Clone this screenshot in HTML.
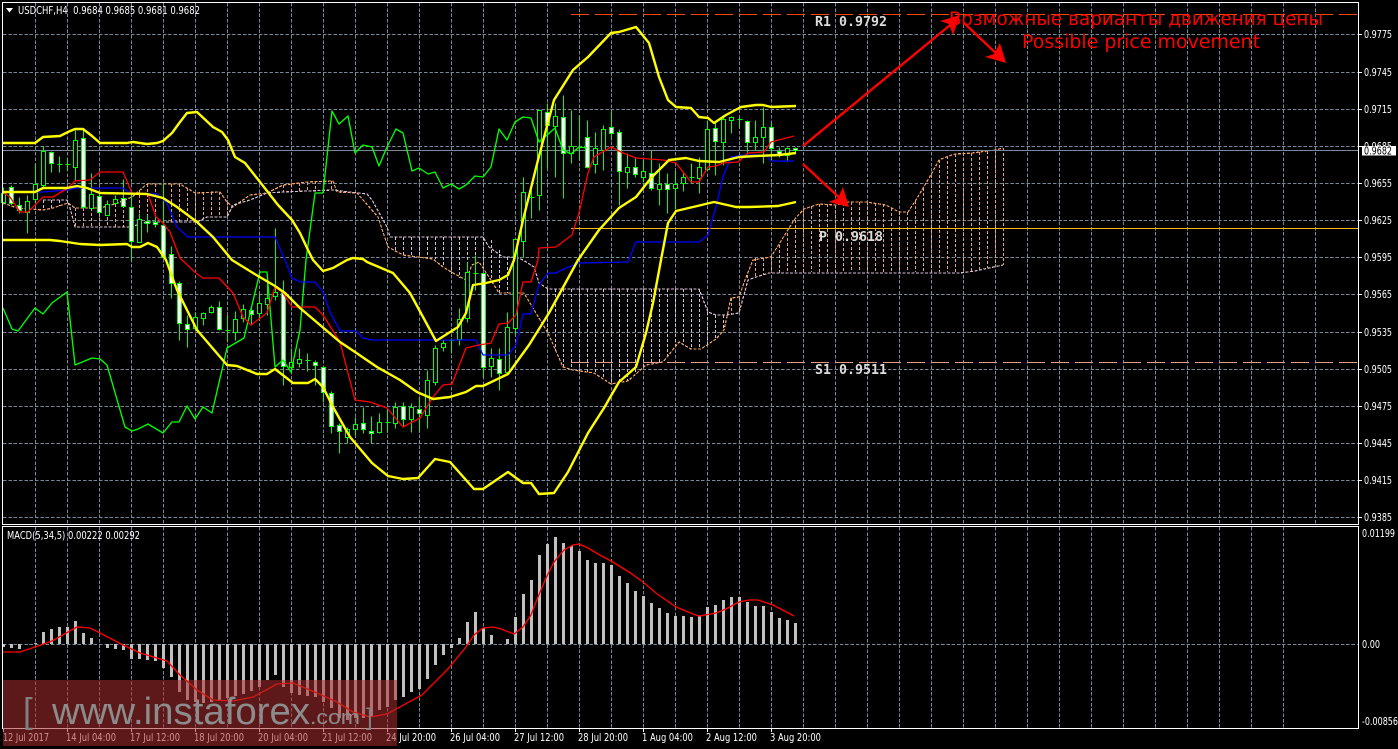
<!DOCTYPE html>
<html><head><meta charset="utf-8"><title>USDCHF,H4</title>
<style>html,body{margin:0;padding:0;background:#000;width:1398px;height:749px;overflow:hidden}svg{display:block}
.ax{font:10.5px "DejaVu Sans","Liberation Sans",sans-serif;fill:#fff}
.mono{font:bold 13.3px "DejaVu Sans Mono","Liberation Mono",monospace;fill:#ddd}
.rd{font:18.5px "DejaVu Sans","Liberation Sans",sans-serif;fill:#f00}
</style></head><body>
<svg width="1398" height="749" viewBox="0 0 1398 749" xmlns="http://www.w3.org/2000/svg">
<rect width="1398" height="749" fill="#000"/>
<!-- grid -->
<g stroke="#778899" fill="none" stroke-dasharray="3.5 1.83" shape-rendering="crispEdges">
<path d="M3 34.5H1358M3 72.5H1358M3 109.5H1358M3 146.5H1358M3 183.5H1358M3 220.5H1358M3 257.5H1358M3 294.5H1358M3 332.5H1358M3 369.5H1358M3 406.5H1358M3 443.5H1358M3 480.5H1358M3 517.5H1358M3 644.5H1358"/>
<path d="M35.5 3v521m32-521v521m32-521v521m32-521v521m32-521v521m32-521v521m32-521v521m32-521v521m32-521v521m32-521v521m32-521v521m32-521v521m32-521v521m32-521v521m32-521v521m32-521v521m32-521v521m32-521v521m32-521v521m32-521v521m32-521v521m32-521v521m32-521v521m32-521v521m32-521v521m32-521v521m32-521v521m32-521v521m32-521v521m32-521v521m32-521v521m32-521v521m32-521v521m32-521v521m32-521v521m32-521v521m32-521v521m32-521v521m32-521v521m32-521v521m32-521v521"/>
<path d="M35.5 527v201m32-201v201m32-201v201m32-201v201m32-201v201m32-201v201m32-201v201m32-201v201m32-201v201m32-201v201m32-201v201m32-201v201m32-201v201m32-201v201m32-201v201m32-201v201m32-201v201m32-201v201m32-201v201m32-201v201m32-201v201m32-201v201m32-201v201m32-201v201m32-201v201m32-201v201m32-201v201m32-201v201m32-201v201m32-201v201m32-201v201m32-201v201m32-201v201m32-201v201m32-201v201m32-201v201m32-201v201m32-201v201m32-201v201m32-201v201"/>
</g>
<!-- ichimoku hatch -->
<g transform="translate(.5 0)" fill="none" stroke-width="1" stroke-dasharray="3 2" shape-rendering="crispEdges">
<path stroke="#F4A460" d="M3 198V204M11 198V205M75 208V227M83 208V227M91 208V227M99 208V227M107 207V227M115 204V227M123 200V227M131 197V227M139 190V225M147 184V222M155 184V222M163 184V222M171 184V222M179 184V222M187 188V222M195 193V222M203 192V219M211 192V217M219 192V217M227 202V217M283 185V192M291 184V191M299 183V191M307 182V191M315 181V190M323 181V190M331 181V190M731 298V315M739 298V313M747 275V280M755 258V277M763 258V275M771 257V273M779 245V273M787 233V273M795 220V272M803 209V272M811 206V272M819 204V272M827 204V272M835 205V272M843 203V272M851 202V272M859 202V272M867 202V272M875 203V272M883 204V272M891 208V272M899 212V272M907 212V272M915 201V272M923 188V272M931 175V272M939 160V272M947 156V272M955 154V272M963 153V271M971 153V271M979 152V270M987 151V268M995 150V266M1003 148V265"/>
<path stroke="#D8BFD8" d="M43 200V209M51 200V208M59 200V206M67 200V204M395 237V250M403 237V255M411 237V256M419 237V257M427 237V258M435 237V259M443 237V267M451 237V274M459 237V278M467 237V275M475 237V263M483 237V268M491 240V280M499 250V293M507 257V293M515 257V293M547 289V332M555 289V350M563 289V367M571 289V370M579 289V371M587 289V372M595 289V373M603 289V379M611 289V384M619 289V382M627 289V381M635 289V372M643 289V367M651 289V364M659 289V362M667 289V358M675 289V346M683 289V344M691 289V349M699 289V349M707 312V344M715 315V339M723 315V331"/>
</g>
<!-- ichimoku spans -->
<g fill="none" stroke-width="1.2" stroke-dasharray="3 1.5" shape-rendering="crispEdges">
<polyline stroke="#F4A460" points="3,203 17,208 43,210 53,208 68,203 75,208 100,208 115,204 132,197 147,184 180,184 195,193 220,192 227,202 233,207 250,195 267,193 283,185 307,182 333,181 337,192 357,193 378,217 388,247 403,255 433,259 443,267 453,273 466,280 472,265 479,262 489,277 499,293 524,293 548,333 563,367 573,370 594,373 611,384 628,381 646,365 663,362 679,342 691,349 701,349 716,339 724,330 731,298 739,297 745,280 753,260 771,257 786,233 794,220 804,209 819,204 836,205 848,202 866,202 886,205 899,212 908,212 916,200 932,173 939,160 949,156 955,154 972,153 995,150 1003,148"/>
<polyline stroke="#D8BFD8" points="43,200 67,200 70,208 75,227 130,227 147,222 197,222 207,217 227,217 233,205 250,200 267,193 283,192 333,190 367,194 372,200 387,227 390,237 483,237 489,247 503,257 516,257 523,260 534,267 539,283 548,289 699,289 708,312 716,315 726,315 739,313 748,280 756,277 769,273 960,273 975,271 1003,265"/>
</g>
<!-- bid + pivots -->
<path d="M3 150.5H1358" stroke="#778899" shape-rendering="crispEdges"/>
<path d="M571 14.5H1358" stroke="#FF4500" stroke-dasharray="18 6" shape-rendering="crispEdges"/>
<path d="M571 362.5H1358" stroke="#DE9C88" stroke-dasharray="18 6" shape-rendering="crispEdges"/>
<path d="M571 228.5H1358" stroke="#FDB813" shape-rendering="crispEdges"/>
<!-- candles -->
<g transform="translate(.5 .5)" shape-rendering="crispEdges" stroke="#0f0" stroke-width="1">
<path fill="none" d="M3 187V204M11 185V204M19 197V213M27 195V233M35 164V203M43 146V187M51 151V172M59 156V172M57 164h5M67 158V170M65 164h5M75 130V180M83 128V208M91 173V208M99 192V213M107 200V215M115 195V204M123 179V207M131 192V260M139 213V242M147 215V232M155 213V227M163 183V258M171 246V298M179 281V340M187 315V347M195 312V330M203 312V325M211 305V313M219 301V330M227 315V341M225 330h5M235 311V340M243 304V322M251 308V325M259 293V320M267 282V315M275 228V300M283 280V385M291 348V373M299 348V367M307 353V371M305 360h5M315 360V385M323 366V402M331 391V433M339 423V453M347 427V443M355 417V435M363 407V433M371 416V443M379 413V433M387 408V432M385 422h5M395 402V428M403 402V427M411 403V432M419 396V431M427 370V428M435 345V385M443 340V351M451 338V353M449 340h5M459 308V345M467 262V322M475 255V290M473 273h5M483 273V377M491 348V377M499 348V390M507 312V373M515 239V335M523 177V257M531 190V218M529 197h5M539 110V210M547 103V168M555 103V177M563 95V198M571 110V163M579 115V160M577 147h5M587 120V168M595 132V173M603 125V170M611 111V140M619 129V205M627 153V188M635 158V177M643 160V182M651 150V190M659 163V205M667 173V213M675 170V209M683 172V191M691 163V183M689 177h5M699 157V193M707 120V171M715 122V175M723 117V165M731 116V133M739 117V127M737 119h5M747 120V152M755 120V150M763 107V163M771 122V160M779 147V157M787 147V161M795 147V152"/>
<path fill="#000" d="M1 193h4v9h-4zM25 201h4v11h-4zM33 184h4v15h-4zM41 151h4v34h-4zM73 140h4v27h-4zM89 194h4v14h-4zM105 204h4v11h-4zM113 199h4v4h-4zM137 219h4v23h-4zM193 317h4v11h-4zM201 313h4v5h-4zM209 307h4v5h-4zM233 319h4v13h-4zM241 309h4v9h-4zM257 303h4v10h-4zM265 298h4v6h-4zM273 292h4v4h-4zM289 362h4v5h-4zM297 359h4v4h-4zM345 429h4v8h-4zM353 424h4v5h-4zM377 422h4v10h-4zM393 407h4v16h-4zM409 407h4v12h-4zM425 380h4v35h-4zM433 348h4v34h-4zM441 343h4v4h-4zM457 319h4v20h-4zM465 272h4v46h-4zM489 358h4v8h-4zM505 327h4v45h-4zM513 239h4v89h-4zM521 192h4v49h-4zM537 110h4v85h-4zM553 116h4v10h-4zM569 146h4v7h-4zM593 148h4v16h-4zM601 129h4v21h-4zM625 167h4v5h-4zM641 171h4v6h-4zM657 184h4v5h-4zM673 184h4v4h-4zM681 177h4v6h-4zM697 167h4v11h-4zM705 129h4v40h-4zM721 119h4v23h-4zM729 117h4v3h-4zM753 137h4v5h-4zM761 127h4v10h-4zM785 148h4v7h-4z"/>
<path fill="#fff" d="M9 187h4v16h-4zM17 205h4v5h-4zM49 152h4v11h-4zM81 138h4v69h-4zM97 196h4v16h-4zM121 198h4v8h-4zM129 207h4v34h-4zM145 221h4v2h-4zM153 222h4v2h-4zM161 225h4v32h-4zM169 254h4v29h-4zM177 283h4v40h-4zM185 324h4v5h-4zM217 307h4v22h-4zM249 310h4v4h-4zM281 292h4v74h-4zM313 362h4v3h-4zM321 367h4v25h-4zM329 393h4v33h-4zM337 425h4v6h-4zM361 423h4v6h-4zM369 431h4v2h-4zM401 406h4v13h-4zM417 409h4v4h-4zM481 273h4v94h-4zM497 359h4v14h-4zM545 112h4v13h-4zM561 117h4v36h-4zM585 137h4v30h-4zM609 127h4v6h-4zM617 132h4v39h-4zM633 167h4v7h-4zM649 173h4v15h-4zM665 184h4v5h-4zM713 128h4v13h-4zM745 121h4v21h-4zM769 127h4v21h-4zM777 151h4v4h-4zM793 148h4v2h-4z"/>
</g>
<!-- ichimoku lines -->
<g fill="none" stroke-width="1.35" stroke-linejoin="round">
<polyline stroke="#0f0" points="3,308 12,329 18,331 35,308 43,314 52,303 67,292 75,365 92,358 100,359 107,365 125,427 132,431 138,429 148,424 163,433 172,422 179,422 187,406 195,419 203,407 212,413 227,348 244,338 260,272 267,272 275,367 283,360 291,372 300,330 306,260 315,193 323,193 332,111 339,124 348,116 355,153 363,145 372,147 379,166 387,147 396,129 403,133 412,171 419,168 428,174 435,172 443,188 451,184 459,189 466,185 475,176 483,177 491,167 499,129 507,140 515,122 523,117 531,118 539,142 547,135 555,128 563,150 571,154 579,147 587,148"/>
<polyline stroke="#00f" points="3,192 43,192 68,190 75,188 123,188 130,193 157,194 167,203 177,227 188,237 275,237 285,260 292,278 300,282 315,282 323,292 330,312 340,331 356,331 363,338 372,340 476,340 483,355 508,355 516,345 523,314 531,314 539,285 548,273 556,273 564,269 579,263 628,262 636,242 699,242 708,235 716,207 723,177 731,157 744,155 766,155 771,161 794,161"/>
<polyline stroke="#f00" points="3,192 10,197 20,212 28,212 43,197 53,197 68,188 75,181 90,180 100,172 123,172 132,193 148,194 156,217 163,223 170,232 180,258 197,274 203,278 219,278 233,293 243,317 251,325 267,313 275,287 283,293 292,307 315,307 323,315 340,342 355,400 370,402 387,408 403,427 420,418 433,397 443,385 452,384 466,348 479,345 491,343 499,324 508,323 516,315 523,282 531,282 538,260 539,248 556,247 572,235 579,213 588,173 594,157 611,147 623,153 636,158 663,160 676,163 691,182 699,182 708,167 716,166 723,163 738,162 748,153 764,152 771,142 794,136"/>
</g>
<!-- bollinger -->
<g fill="none" stroke="#ff0" stroke-width="2.4" stroke-linejoin="round">
<polyline points="3,143 35,143 43,137 60,136 68,132 75,129 83,129 92,136 100,143 127,143 133,142 147,144 157,143 163,141 172,133 180,122 187,113 197,112 213,127 222,132 228,140 235,157 245,163 260,182 278,205 292,220 300,233 308,250 313,260 323,271 333,268 347,260 353,258 363,259 367,262 393,273 410,293 436,341 458,327 466,313 473,285 486,283 499,280 508,275 514,260 523,220 538,160 546,130 554,100 573,70 588,57 611,33 619,32 636,27 649,43 659,77 668,100 676,107 691,108 699,117 708,118 714,123 726,115 741,107 756,105 763,105 771,107 796,106"/>
<polyline points="3,192 35,192 43,188 67,188 77,186 87,188 100,193 147,194 163,198 177,207 197,222 213,237 232,260 253,273 275,286 285,293 300,308 320,325 340,342 355,352 377,367 400,380 417,392 433,399 450,397 466,392 476,386 483,386 508,374 529,345 549,313 578,260 599,230 619,208 636,197 651,178 669,160 686,158 699,161 719,162 739,157 756,156 779,155 796,153"/>
<polyline points="3,240 50,240 60,241 80,244 100,245 127,244 132,247 140,247 148,243 157,247 166,260 177,290 197,330 227,365 237,366 257,374 267,374 275,369 293,383 308,383 315,379 323,387 333,407 350,437 372,463 388,476 403,479 418,478 435,459 450,462 466,480 474,489 483,489 508,472 523,483 531,483 539,494 554,493 568,472 588,433 604,408 619,382 636,367 646,333 653,303 661,260 668,223 676,211 693,207 714,202 736,207 749,207 778,206 796,202"/>
</g>
<!-- macd bars -->
<g transform="translate(.5 0)" stroke="#C0C0C0" stroke-width="3" fill="none" shape-rendering="crispEdges">
<path d="M3 644V647M11 644V648M19 644V649M35 644V643M43 644V632M51 644V629M59 644V627M67 644V627M75 644V621M83 644V633M91 644V638M107 644V648M115 644V649M123 644V650M131 644V659M139 644V659M147 644V660M155 644V661M163 644V668M171 644V677M179 644V692M187 644V700M195 644V702M203 644V703M211 644V702M219 644V701M227 644V698M235 644V696M243 644V694M251 644V691M259 644V687M267 644V680M275 644V675M283 644V687M291 644V693M299 644V695M307 644V696M315 644V697M323 644V702M331 644V708M339 644V718M347 644V720M355 644V718M363 644V718M371 644V717M379 644V710M387 644V707M395 644V700M403 644V697M411 644V692M419 644V689M427 644V679M435 644V665M443 644V655M451 644V648M459 644V638M467 644V622M475 644V612M483 644V628M491 644V635M507 644V639M515 644V617M523 644V594M531 644V580M539 644V555M547 644V544M555 644V537M563 644V543M571 644V546M579 644V551M587 644V560M595 644V563M603 644V563M611 644V565M619 644V576M627 644V583M635 644V591M643 644V596M651 644V603M659 644V608M667 644V613M675 644V616M683 644V616M691 644V617M699 644V616M707 644V607M715 644V605M723 644V600M731 644V597M739 644V597M747 644V602M755 644V606M763 644V606M771 644V612M779 644V618M787 644V620M795 644V623"/>
</g>
<polyline fill="none" stroke="#f00" stroke-width="1.35" points="3,652 20,652 35,647 52,641 77,627 90,628 100,633 123,645 140,653 167,661 180,675 197,690 213,700 233,701 253,697 277,684 293,683 317,693 337,702 353,712 370,717 387,714 422,695 447,670 466,647 474,635 483,628 493,627 501,629 514,634 523,627 531,615 538,597 546,578 554,562 564,550 573,545 579,544 588,548 598,554 611,561 629,572 643,582 656,593 676,607 693,614 699,616 716,613 726,609 739,602 749,600 758,600 773,605 794,616"/>
<!-- frames -->
<g stroke="#fff" fill="none" shape-rendering="crispEdges">
<path d="M2.5 2.5H1358.5V524.5H2.5Z"/>
<path d="M2.5 526.5H1358.5V728.5H2.5Z"/>
<path d="M1358 34.5h4M1358 72.5h4M1358 109.5h4M1358 146.5h4M1358 183.5h4M1358 220.5h4M1358 257.5h4M1358 294.5h4M1358 332.5h4M1358 369.5h4M1358 406.5h4M1358 443.5h4M1358 480.5h4M1358 517.5h4M3.5 728v4M67.5 728v4M131.5 728v4M195.5 728v4M259.5 728v4M323.5 728v4M387.5 728v4M451.5 728v4M515.5 728v4M579.5 728v4M643.5 728v4M707.5 728v4M771.5 728v4"/>
</g>
<!-- header -->
<path d="M6 8h7l-3.5 4.5z" fill="#fff"/>
<text class="ax" x="18" y="14" textLength="182" lengthAdjust="spacingAndGlyphs" xml:space="preserve">USDCHF,H4  0.9684 0.9685 0.9681 0.9682</text>
<text class="ax" x="7" y="539" textLength="133" lengthAdjust="spacingAndGlyphs">MACD(5,34,5) 0.00222 0.00292</text>
<!-- price axis -->
<g class="ax">
<text x="1364" y="38" textLength="28" lengthAdjust="spacingAndGlyphs">0.9775</text>
<text x="1364" y="76" textLength="28" lengthAdjust="spacingAndGlyphs">0.9745</text>
<text x="1364" y="113" textLength="28" lengthAdjust="spacingAndGlyphs">0.9715</text>
<text x="1364" y="150" textLength="28" lengthAdjust="spacingAndGlyphs">0.9685</text>
<text x="1364" y="187" textLength="28" lengthAdjust="spacingAndGlyphs">0.9655</text>
<text x="1364" y="224" textLength="28" lengthAdjust="spacingAndGlyphs">0.9625</text>
<text x="1364" y="261" textLength="28" lengthAdjust="spacingAndGlyphs">0.9595</text>
<text x="1364" y="298" textLength="28" lengthAdjust="spacingAndGlyphs">0.9565</text>
<text x="1364" y="336" textLength="28" lengthAdjust="spacingAndGlyphs">0.9535</text>
<text x="1364" y="373" textLength="28" lengthAdjust="spacingAndGlyphs">0.9505</text>
<text x="1364" y="410" textLength="28" lengthAdjust="spacingAndGlyphs">0.9475</text>
<text x="1364" y="447" textLength="28" lengthAdjust="spacingAndGlyphs">0.9445</text>
<text x="1364" y="484" textLength="28" lengthAdjust="spacingAndGlyphs">0.9415</text>
<text x="1364" y="521" textLength="28" lengthAdjust="spacingAndGlyphs">0.9385</text>
<text x="1362" y="537" textLength="33" lengthAdjust="spacingAndGlyphs">0.01199</text>
<text x="1362" y="648" textLength="18" lengthAdjust="spacingAndGlyphs">0.00</text>
<text x="1362" y="725" textLength="36" lengthAdjust="spacingAndGlyphs">-0.00856</text>
</g>
<rect x="1362" y="146" width="34" height="9.5" fill="#fff"/>
<text x="1364" y="154.5" font-family="DejaVu Sans,sans-serif" font-size="10.5" fill="#000" textLength="28" lengthAdjust="spacingAndGlyphs">0.9682</text>
<!-- time axis -->
<g class="ax">
<text x="3" y="741" textLength="46" lengthAdjust="spacingAndGlyphs">12 Jul 2017</text>
<text x="66" y="741" textLength="50" lengthAdjust="spacingAndGlyphs">14 Jul 04:00</text>
<text x="130" y="741" textLength="50" lengthAdjust="spacingAndGlyphs">17 Jul 12:00</text>
<text x="194" y="741" textLength="50" lengthAdjust="spacingAndGlyphs">18 Jul 20:00</text>
<text x="258" y="741" textLength="50" lengthAdjust="spacingAndGlyphs">20 Jul 04:00</text>
<text x="322" y="741" textLength="50" lengthAdjust="spacingAndGlyphs">21 Jul 12:00</text>
<text x="386" y="741" textLength="50" lengthAdjust="spacingAndGlyphs">24 Jul 20:00</text>
<text x="450" y="741" textLength="50" lengthAdjust="spacingAndGlyphs">26 Jul 04:00</text>
<text x="514" y="741" textLength="50" lengthAdjust="spacingAndGlyphs">27 Jul 12:00</text>
<text x="578" y="741" textLength="50" lengthAdjust="spacingAndGlyphs">28 Jul 20:00</text>
<text x="642" y="741" textLength="51" lengthAdjust="spacingAndGlyphs">1 Aug 04:00</text>
<text x="706" y="741" textLength="51" lengthAdjust="spacingAndGlyphs">2 Aug 12:00</text>
<text x="770" y="741" textLength="51" lengthAdjust="spacingAndGlyphs">3 Aug 20:00</text>
</g>
<!-- watermark -->
<rect x="3" y="680" width="394" height="66" fill="#aa2d2d" fill-opacity=".55"/>
<g font-family="Liberation Sans,sans-serif" fill="#8c8c8c">
<text x="23" y="722.5" font-size="35" fill="#808080">[</text>
<text x="52" y="724" font-size="38" textLength="258" lengthAdjust="spacingAndGlyphs">www.instaforex</text>
<text x="310" y="724" font-size="20" textLength="50" lengthAdjust="spacingAndGlyphs">.com</text>
<text x="366" y="725" font-size="24" fill="#808080">]</text>
</g>
<!-- pivot labels -->
<text class="mono" x="815" y="26">R1 0.9792</text>
<text class="mono" x="819" y="241">P 0.9618</text>
<text class="mono" x="815" y="374">S1 0.9511</text>
<!-- arrows -->
<g fill="#f00" stroke="#f00">
<path d="M803 146L955 21" stroke-width="2.4" fill="none"/>
<path d="M960 15L940 21 949 24 953 35Z" stroke="none"/>
<path d="M963 22L1002 59" stroke-width="2.4" fill="none"/>
<path d="M1006 63L985 57 994 54 1000 43Z" stroke="none"/>
<path d="M803 164L844 202" stroke-width="2.4" fill="none"/>
<path d="M849 207L829 202 838 198 843 187Z" stroke="none"/>
</g>
<text class="rd" x="949" y="25" textLength="374" lengthAdjust="spacingAndGlyphs">Возможные варианты движения цены</text>
<text class="rd" x="1022" y="48" textLength="238" lengthAdjust="spacingAndGlyphs">Possible price movement</text>
</svg>
</body></html>
